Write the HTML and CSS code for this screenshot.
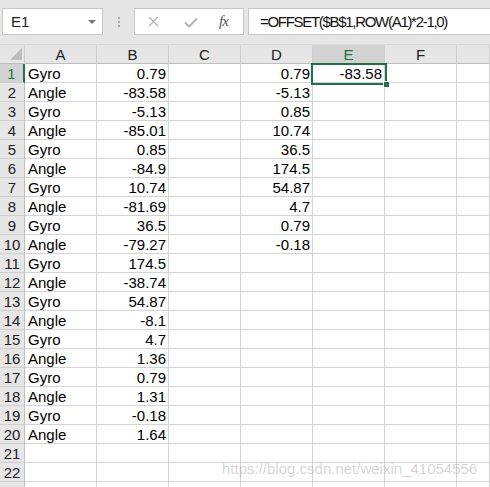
FILE: index.html
```html
<!DOCTYPE html>
<html>
<head>
<meta charset="utf-8">
<link rel="stylesheet" href="styles.css">
</head>
<body>
<div class="app">
  <div class="toolbar">
    <div class="namebox"><span class="nb-text">E1</span><span class="nb-arrow"></span></div>
    <div class="sep"><i></i><i></i><i></i></div>
    <div class="fxbox">
      <svg class="ico-x" width="11" height="11" viewBox="0 0 11 11"><path d="M1 1L10 10M10 1L1 10" stroke="#b4b4b4" stroke-width="1.4" fill="none"/></svg>
      <svg class="ico-ok" width="14" height="11" viewBox="0 0 14 11"><path d="M1 5.5L5 9.5L13 1.5" stroke="#b4b4b4" stroke-width="2" fill="none"/></svg>
      <span class="fx">fx</span>
    </div>
    <div class="formula">=OFFSET($B$1,ROW(A1)*2-1,0)</div>
  </div>
  <div class="sheet">
    <div class="grid">
      <div class="corner"><span class="tri"></span></div>
      <div class="ch">A</div><div class="ch">B</div><div class="ch">C</div><div class="ch">D</div><div class="ch sel">E</div><div class="ch">F</div><div class="ch"></div>

      <div class="rh sel">1</div><div class="c">Gyro</div><div class="c n">0.79</div><div class="c"></div><div class="c n">0.79</div><div class="c n">-83.58</div><div class="c"></div><div class="c"></div>
      <div class="rh">2</div><div class="c">Angle</div><div class="c n">-83.58</div><div class="c"></div><div class="c n">-5.13</div><div class="c"></div><div class="c"></div><div class="c"></div>
      <div class="rh">3</div><div class="c">Gyro</div><div class="c n">-5.13</div><div class="c"></div><div class="c n">0.85</div><div class="c"></div><div class="c"></div><div class="c"></div>
      <div class="rh">4</div><div class="c">Angle</div><div class="c n">-85.01</div><div class="c"></div><div class="c n">10.74</div><div class="c"></div><div class="c"></div><div class="c"></div>
      <div class="rh">5</div><div class="c">Gyro</div><div class="c n">0.85</div><div class="c"></div><div class="c n">36.5</div><div class="c"></div><div class="c"></div><div class="c"></div>
      <div class="rh">6</div><div class="c">Angle</div><div class="c n">-84.9</div><div class="c"></div><div class="c n">174.5</div><div class="c"></div><div class="c"></div><div class="c"></div>
      <div class="rh">7</div><div class="c">Gyro</div><div class="c n">10.74</div><div class="c"></div><div class="c n">54.87</div><div class="c"></div><div class="c"></div><div class="c"></div>
      <div class="rh">8</div><div class="c">Angle</div><div class="c n">-81.69</div><div class="c"></div><div class="c n">4.7</div><div class="c"></div><div class="c"></div><div class="c"></div>
      <div class="rh">9</div><div class="c">Gyro</div><div class="c n">36.5</div><div class="c"></div><div class="c n">0.79</div><div class="c"></div><div class="c"></div><div class="c"></div>
      <div class="rh">10</div><div class="c">Angle</div><div class="c n">-79.27</div><div class="c"></div><div class="c n">-0.18</div><div class="c"></div><div class="c"></div><div class="c"></div>
      <div class="rh">11</div><div class="c">Gyro</div><div class="c n">174.5</div><div class="c"></div><div class="c"></div><div class="c"></div><div class="c"></div><div class="c"></div>
      <div class="rh">12</div><div class="c">Angle</div><div class="c n">-38.74</div><div class="c"></div><div class="c"></div><div class="c"></div><div class="c"></div><div class="c"></div>
      <div class="rh">13</div><div class="c">Gyro</div><div class="c n">54.87</div><div class="c"></div><div class="c"></div><div class="c"></div><div class="c"></div><div class="c"></div>
      <div class="rh">14</div><div class="c">Angle</div><div class="c n">-8.1</div><div class="c"></div><div class="c"></div><div class="c"></div><div class="c"></div><div class="c"></div>
      <div class="rh">15</div><div class="c">Gyro</div><div class="c n">4.7</div><div class="c"></div><div class="c"></div><div class="c"></div><div class="c"></div><div class="c"></div>
      <div class="rh">16</div><div class="c">Angle</div><div class="c n">1.36</div><div class="c"></div><div class="c"></div><div class="c"></div><div class="c"></div><div class="c"></div>
      <div class="rh">17</div><div class="c">Gyro</div><div class="c n">0.79</div><div class="c"></div><div class="c"></div><div class="c"></div><div class="c"></div><div class="c"></div>
      <div class="rh">18</div><div class="c">Angle</div><div class="c n">1.31</div><div class="c"></div><div class="c"></div><div class="c"></div><div class="c"></div><div class="c"></div>
      <div class="rh">19</div><div class="c">Gyro</div><div class="c n">-0.18</div><div class="c"></div><div class="c"></div><div class="c"></div><div class="c"></div><div class="c"></div>
      <div class="rh">20</div><div class="c">Angle</div><div class="c n">1.64</div><div class="c"></div><div class="c"></div><div class="c"></div><div class="c"></div><div class="c"></div>
      <div class="rh">21</div><div class="c"></div><div class="c"></div><div class="c"></div><div class="c"></div><div class="c"></div><div class="c"></div><div class="c"></div>
      <div class="rh">22</div><div class="c"></div><div class="c"></div><div class="c"></div><div class="c"></div><div class="c"></div><div class="c"></div><div class="c"></div>
      <div class="rh"></div><div class="c"></div><div class="c"></div><div class="c"></div><div class="c"></div><div class="c"></div><div class="c"></div><div class="c"></div>
    </div>
    <div class="selbox"><span class="handle"></span></div>
    <div class="watermark">https://blog.csdn.net/weixin_41054556</div>
  </div>
</div>
</body>
</html>
```
FILE: styles.css
```css
html, body {
  margin: 0;
  padding: 0;
  width: 490px;
  height: 487px;
  overflow: hidden;
  background: #e6e6e6;
}
.app {
  font-family: "Liberation Sans", Arial, sans-serif;
  font-size: 15px;
  color: #000;
}
.toolbar {
  height: 45px;
  box-sizing: border-box;
  padding-top: 8px;
  display: flex;
  align-items: flex-start;
  border-bottom: 1px solid #d8d8d8;
}
.namebox {
  margin-left: 2px;
  width: 101px;
  height: 27px;
  box-sizing: border-box;
  background: #fff;
  border: 1px solid #c6c6c6;
  display: flex;
  align-items: center;
  justify-content: space-between;
  padding: 0 6px 0 8px;
}
.nb-text {
  font-size: 15px;
  color: #222;
}
.nb-arrow {
  width: 0;
  height: 0;
  border-left: 4px solid transparent;
  border-right: 4px solid transparent;
  border-top: 4px solid #7a7a7a;
}
.sep {
  width: 31px;
  height: 27px;
  display: flex;
  flex-direction: column;
  align-items: center;
  justify-content: center;
  gap: 2px;
}
.sep i {
  display: block;
  width: 2px;
  height: 2px;
  background: #a8a8a8;
}
.fxbox {
  width: 110px;
  height: 27px;
  box-sizing: border-box;
  background: #fff;
  border: 1px solid #c6c6c6;
  display: flex;
  align-items: center;
  padding-left: 13px;
}
.ico-x { margin-right: 25px; }
.ico-ok { margin-right: 21px; margin-top: 1px; }
.fx {
  font-family: "Liberation Serif", "Times New Roman", serif;
  font-style: italic;
  font-size: 15px;
  color: #555;
  letter-spacing: -1px;
}
.formula {
  margin-left: 4px;
  flex: 1;
  height: 27px;
  box-sizing: border-box;
  background: #fff;
  border: 1px solid #c6c6c6;
  border-right: none;
  padding-left: 11px;
  line-height: 25px;
  font-size: 15px;
  letter-spacing: -1.3px;
  color: #111;
  white-space: nowrap;
}
.sheet {
  position: relative;
  background: #fff;
}
.grid {
  display: grid;
  grid-template-columns: 25px repeat(6, 72px) 1fr;
  grid-auto-rows: 19px;
}
.grid > div {
  box-sizing: border-box;
  border-right: 1px solid #d4d4d4;
  border-bottom: 1px solid #d4d4d4;
  padding-top: 1px;
  line-height: 18px;
  white-space: nowrap;
  overflow: hidden;
}
.corner {
  background: #e6e6e6;
  position: relative;
  border-bottom-color: #bfbfbf !important;
  border-right-color: #cfcfcf !important;
}
.tri {
  position: absolute;
  right: 2px;
  bottom: 3px;
  width: 0;
  height: 0;
  border-left: 12px solid transparent;
  border-bottom: 12px solid #bdbdbd;
}
.ch {
  background: #e6e6e6;
  text-align: center;
  color: #222;
  border-bottom-color: #bfbfbf !important;
  border-right-color: #cfcfcf !important;
}
.ch.sel {
  background: #d2d2d2;
  color: #217346;
}
.rh {
  background: #e6e6e6;
  text-align: center;
  color: #222;
  border-right-color: #bfbfbf !important;
  border-bottom-color: #cfcfcf !important;
}
.rh.sel {
  background: #d2d2d2;
  color: #217346;
  border-right: 2px solid #217346 !important;
}
.grid > .c {
  padding-left: 3px;
  padding-right: 2px;
  background: #fff;
}
.c.n {
  text-align: right;
}
.selbox {
  position: absolute;
  left: 311px;
  top: 18px;
  width: 76px;
  height: 22px;
  box-sizing: border-box;
  border: 2px solid #217346;
}
.handle {
  position: absolute;
  right: -5px;
  bottom: -5px;
  width: 5px;
  height: 5px;
  background: #217346;
  border: 1px solid #fff;
}
.watermark {
  position: absolute;
  left: 222px;
  top: 415px;
  font-size: 15px;
  color: rgba(160, 160, 160, 0.45);
  white-space: nowrap;
}
```
